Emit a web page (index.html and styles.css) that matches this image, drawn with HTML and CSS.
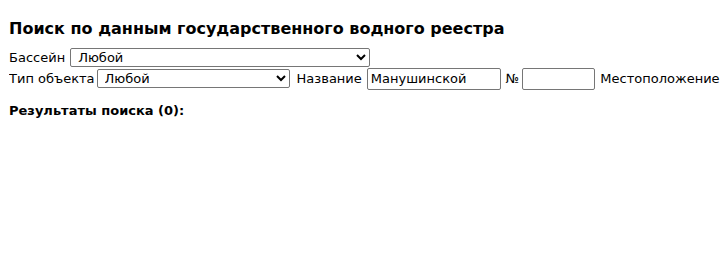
FILE: index.html
```html
<!DOCTYPE html>
<html lang="ru">
<head>
    <meta charset="UTF-8">
    <title>Государственный водный реестр</title>
    <link rel="stylesheet" href="styles.css">
</head>
<body>

<h1 class="page-title">Поиск по данным государственного водного реестра</h1>

<form class="search-form">
    <div class="form-row">
        <label>Бассейн</label>
        <select class="field basin-select">
            <option>Любой</option>
        </select>
    </div>
    <div class="form-row">
        <label>Тип объекта</label>
        <select class="field type-select">
            <option>Любой</option>
        </select>
        <label class="name-label">Название</label>
        <input type="text" class="field name-input" value="Манушинской">
        <label class="num-label">№</label>
        <input type="text" class="field num-input">
        <label>Местоположение</label>
    </div>
</form>

<div class="results">Результаты поиска (0):</div>

</body>
</html>
```

FILE: styles.css
```css
/* Global Styling */
body {
    font-family: 'DejaVu Sans', Verdana, sans-serif;
    font-size: 13px;
    color: #000;
    background-color: #fff;
    margin: 8px 0 8px 9px;
}

/* Title */
.page-title {
    font-size: 16px;
    font-weight: bold;
    margin: 11px 0 10px 0;
}

/* Search Form */
.form-row {
    display: flex;
    align-items: center;
    gap: 5px;
    height: 19px;
    white-space: nowrap;
}

.form-row label {
    flex-shrink: 0;
}

.form-row + .form-row {
    margin-top: 2px;
}

.field {
    flex-shrink: 0;
    font-family: 'DejaVu Sans', Verdana, sans-serif;
    font-size: 13px;
    height: 19px;
    box-sizing: border-box;
    border: 1px solid #767676;
    border-radius: 2px;
    padding: 0 3px;
    background-color: #fff;
}

.basin-select {
    width: 300px;
}

.type-select {
    width: 193px;
    margin-left: -3px;
}

.name-label {
    margin-left: 2px;
}

.name-input {
    width: 134px;
    height: 22px;
}

.num-label {
    margin-right: -2px;
}

.num-input {
    width: 73px;
    height: 22px;
}

/* Results */
.results {
    font-weight: bold;
    margin-top: 15px;
}
```
